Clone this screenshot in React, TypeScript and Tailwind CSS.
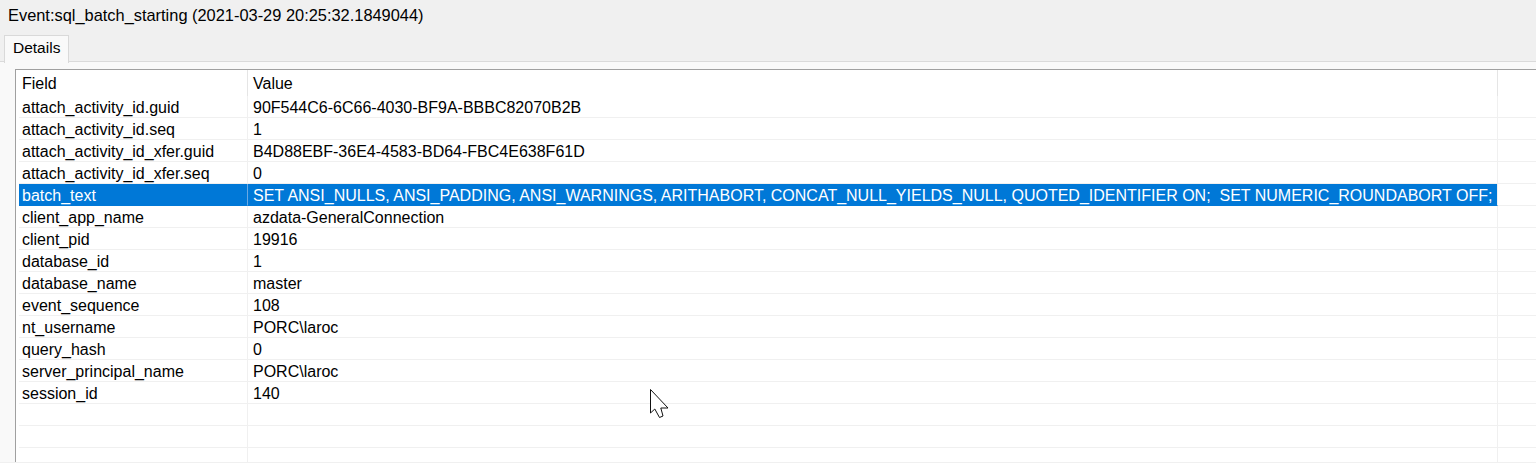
import React from 'react';

// Event properties shown in the details grid
const rows: [string, string][] = [
  ['attach_activity_id.guid', '90F544C6-6C66-4030-BF9A-BBBC82070B2B'],
  ['attach_activity_id.seq', '1'],
  ['attach_activity_id_xfer.guid', 'B4D88EBF-36E4-4583-BD64-FBC4E638F61D'],
  ['attach_activity_id_xfer.seq', '0'],
  ['batch_text', 'SET ANSI_NULLS, ANSI_PADDING, ANSI_WARNINGS, ARITHABORT, CONCAT_NULL_YIELDS_NULL, QUOTED_IDENTIFIER ON;  SET NUMERIC_ROUNDABORT OFF;'],
  ['client_app_name', 'azdata-GeneralConnection'],
  ['client_pid', '19916'],
  ['database_id', '1'],
  ['database_name', 'master'],
  ['event_sequence', '108'],
  ['nt_username', 'PORC\\laroc'],
  ['query_hash', '0'],
  ['server_principal_name', 'PORC\\laroc'],
  ['session_id', '140'],
  ['', ''],
  ['', ''],
  ['', ''],
];

const SELECTED = 'batch_text';

const Cursor = () => (
  <svg width="20" height="30" viewBox="0 0 20 30" className="absolute left-[650px] top-[389px]">
    <polygon
      points="0.5,0.5 0.5,24 4.8,20 9.5,28.5 13,27 10.8,19 18,19"
      fill="#fff"
      stroke="#111"
      strokeWidth="1"
      strokeLinejoin="round"
    />
  </svg>
);

const App = () => {
  return (
    <div className="relative w-[1536px] h-[463px] overflow-hidden bg-[#f0f0f0] text-black font-['Liberation_Sans',Arial,sans-serif]">
      {/* Title */}
      <div className="h-[34px] pl-[8px] pt-[6px] text-[16.4px] leading-[18px]">
        Event:sql_batch_starting (2021-03-29 20:25:32.1849044)
      </div>

      {/* Tab strip */}
      <div className="flex h-[28px] pl-[4px] border-b border-[#dadada]">
        <div className="mt-[1px] h-[28px] w-[65px] border border-b-0 border-[#d9d9d9] bg-[#f9f9f9] pl-[8px] pt-[3px] text-[15.5px] leading-[18px]">
          Details
        </div>
      </div>

      {/* Tab panel */}
      <div className="h-[400px] bg-[#f9f9f9] pl-[15px] pt-[7px]">
        <div className="h-full border-l border-t border-[#a0a0a0] bg-white text-[16px] leading-[20px]">
          {/* Header */}
          <div className="flex h-[26px] pl-[3px]">
            <div className="w-[229px] border-r border-[#e5e5e5] pl-[3px] pt-[4px]">Field</div>
            <div className="w-[1250px] border-r border-[#e5e5e5] pl-[5px] pt-[4px]">Value</div>
            <div className="flex-1" />
          </div>

          {/* Rows */}
          {rows.map(([field, value], i) => {
            const sel = field === SELECTED;
            return (
              <div key={i} className="flex h-[22px] pl-[3px]">
                <div
                  className={`w-[229px] border-r pl-[3px] pt-[2px] border-b ${
                    sel ? 'bg-[#0078d7] text-white border-r-[#6aa9e4] border-b-[#0078d7]' : 'border-[#f0f0f0]'
                  }`}
                >
                  {field}
                </div>
                <div
                  className={`w-[1250px] border-r pl-[5px] pt-[2px] border-b whitespace-pre overflow-hidden ${
                    sel ? 'bg-[#0078d7] text-white border-r-[#f0f0f0] border-b-[#0078d7]' : 'border-[#f0f0f0]'
                  }`}
                >
                  {value}
                </div>
                <div className="flex-1 border-b border-[#f0f0f0]" />
              </div>
            );
          })}
        </div>
      </div>

      <Cursor />
    </div>
  );
};

export default App;
